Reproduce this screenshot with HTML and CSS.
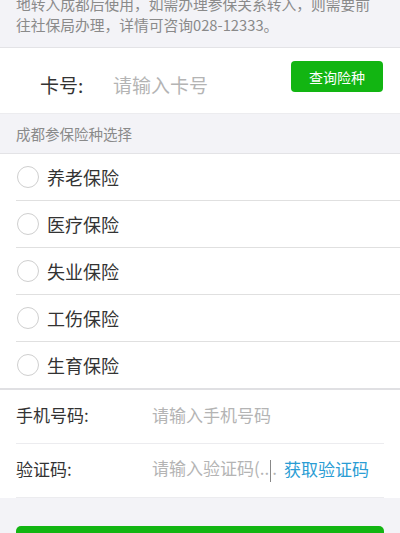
FILE: index.html
```html
<!DOCTYPE html>
<html lang="zh-CN">
<head>
<meta charset="utf-8">
<title>成都参保险种选择</title>
<link rel="stylesheet" href="styles.css">
</head>
<body>
<div class="page">
  <p class="notice">地转入成都后使用，如需办理参保关系转入，则需要前往社保局办理，详情可咨询028-12333。</p>
  <div class="card">
    <span class="card-label">卡号:</span>
    <span class="card-input">请输入卡号</span>
    <button class="btn-query">查询险种</button>
  </div>
  <div class="section-title">成都参保险种选择</div>
  <ul class="options">
    <li class="option"><span class="radio"></span><span>养老保险</span></li>
    <li class="option"><span class="radio"></span><span>医疗保险</span></li>
    <li class="option"><span class="radio"></span><span>失业保险</span></li>
    <li class="option"><span class="radio"></span><span>工伤保险</span></li>
    <li class="option"><span class="radio"></span><span>生育保险</span></li>
  </ul>
  <div class="form">
    <div class="form-row">
      <span class="form-label">手机号码:</span>
      <span class="form-input">请输入手机号码</span>
    </div>
    <div class="form-row">
      <span class="form-label">验证码:</span>
      <span class="form-input">请输入验证码(..<span class="caret"></span>.</span>
      <span class="get-code">获取验证码</span>
    </div>
  </div>
  <div class="footer">
    <button class="btn-submit" aria-label="提交"></button>
  </div>
</div>
</body>
</html>
```
FILE: styles.css
```css
* { box-sizing: border-box; }
html, body {
  margin: 0;
  padding: 0;
  background: #f3f3f7;
  font-family: "Noto Sans CJK SC", "Noto Sans", sans-serif;
  overflow: hidden;
}
.page {
  width: 400px;
  height: 533px;
  overflow: hidden;
}
.notice {
  margin: -7px 0 0;
  padding: 0 16px 12px;
  font-size: 14.75px;
  line-height: 21px;
  color: #8a8a8a;
  border-bottom: 1px solid #e3e3e6;
}
.card {
  display: flex;
  align-items: flex-start;
  height: 66px;
  background: #fff;
  padding: 0 17px 0 40px;
  border-bottom: 1px solid #ececef;
}
.card-label {
  margin-top: 25px;
  font-size: 19px;
  line-height: 24px;
  color: #333;
  width: 73px;
}
.card-input {
  margin-top: 25px;
  font-size: 19px;
  line-height: 24px;
  color: #b4b4b4;
  flex: 1;
}
.btn-query {
  margin-top: 13px;
  width: 92px;
  height: 31px;
  border: none;
  border-radius: 4px;
  background: #12b512;
  color: #fff;
  font-family: inherit;
  font-size: 14px;
  padding: 0;
}
.section-title {
  height: 40px;
  line-height: 40px;
  padding-left: 16px;
  font-size: 14.5px;
  color: #8a8a8a;
  border-bottom: 1px solid #e3e3e6;
}
.options {
  list-style: none;
  margin: 0;
  padding: 0 0 0 16px;
  background: #fff;
  border-bottom: 2px solid #e0e0e3;
}
.option {
  display: flex;
  align-items: center;
  height: 47px;
  padding-bottom: 1px;
  font-size: 18px;
  color: #333;
  border-bottom: 1px solid #e0e0e0;
}
.option:last-child { border-bottom: none; height: 46px; }
.radio {
  width: 22px;
  height: 22px;
  margin: 0 8px 0 1px;
  border: 1px solid #cfcfcf;
  border-radius: 50%;
  flex: none;
}
.form {
  background: #fff;
  padding: 0 16px;
}
.form-row {
  display: flex;
  align-items: center;
  height: 54px;
  padding-bottom: 4px;
  border-bottom: 1px solid #ececef;
  font-size: 17px;
}
.form-label {
  width: 136px;
  color: #333;
  flex: none;
}
.form-input {
  color: #b4b4b4;
  white-space: nowrap;
}
.caret {
  display: inline-block;
  width: 1px;
  height: 22px;
  background: #888;
  vertical-align: middle;
  margin: 0 1px;
}
.get-code {
  margin-left: 7px;
  color: #2a9dd4;
}
.footer {
  padding: 28px 16px 0;
}
.btn-submit {
  display: block;
  width: 100%;
  height: 46px;
  border: none;
  border-radius: 5px;
  background: #12b512;
}
```
